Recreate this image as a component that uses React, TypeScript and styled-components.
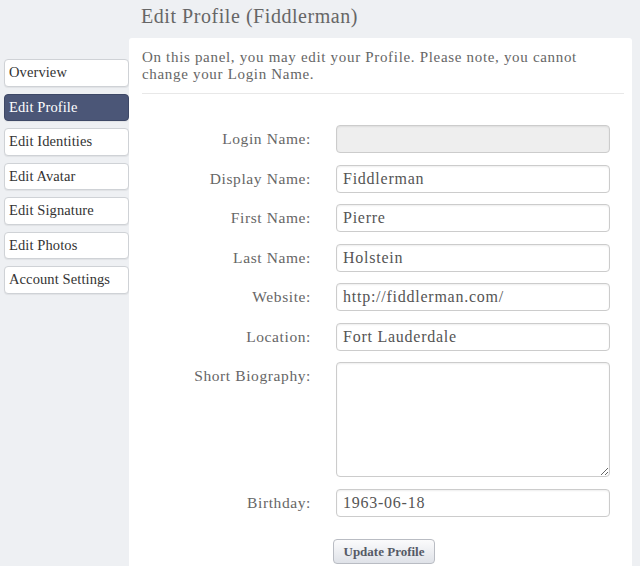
import React from "react";
import styled, { createGlobalStyle } from "styled-components";

const serif = `"Liberation Serif", "DejaVu Serif", serif`;

const Global = createGlobalStyle`
  html, body { margin: 0; padding: 0; }
  body {
    background: #eef0f3;
    font-family: ${serif};
    color: #555;
  }
`;

const Page = styled.div`
  width: 640px;
  height: 566px;
  display: flex;
  flex-direction: column;
  overflow: hidden;
`;

const Title = styled.h1`
  margin: 0;
  height: 38px;
  padding: 5px 0 0 141px;
  box-sizing: border-box;
  font-size: 20px;
  font-weight: normal;
  color: #666;
  letter-spacing: 0.55px;
`;

const Body = styled.div`
  flex: 1;
  display: flex;
  align-items: stretch;
`;

const Sidebar = styled.nav`
  width: 125px;
  padding: 21px 0 0 4px;
  display: flex;
  flex-direction: column;
  gap: 7px;
  flex-shrink: 0;
`;

const NavButton = styled.div<{ $active?: boolean }>`
  height: 27.5px;
  box-sizing: border-box;
  border: 1px solid ${(p) => (p.$active ? "#3e4866" : "#cfd2d6")};
  border-radius: 4px;
  background: ${(p) => (p.$active ? "#4b5677" : "#fff")};
  color: ${(p) => (p.$active ? "#fff" : "#333")};
  font-size: 14.5px;
  letter-spacing: 0.1px;
  padding: 0 0 0 4px;
  display: flex;
  align-items: center;
  box-shadow: 0 1px 1px rgba(0, 0, 0, 0.06);
`;

const Panel = styled.main`
  flex: 1;
  margin-right: 8px;
  background: #fff;
  border-radius: 3px 3px 0 0;
  padding: 11px 8px 0 13px;
  display: flex;
  flex-direction: column;
`;

const Intro = styled.p`
  margin: 0;
  font-size: 15px;
  line-height: 17px;
  color: #666;
  letter-spacing: 0.68px;
  padding-bottom: 10px;
  border-bottom: 1px solid #e8e8e8;
`;

const Form = styled.form`
  display: grid;
  grid-template-columns: 169px 274px;
  column-gap: 25px;
  row-gap: 11.5px;
  margin-top: 31px;
  align-items: start;
`;

const Label = styled.label`
  text-align: right;
  font-size: 15.5px;
  letter-spacing: 0.6px;
  color: #666;
  line-height: 28px;
`;

const Field = styled.input<{ $disabled?: boolean }>`
  width: 274px;
  height: 28px;
  box-sizing: border-box;
  border: 1px solid #cccccc;
  border-radius: 4px;
  background: ${(p) => (p.$disabled ? "#eeeeee" : "#fff")};
  box-shadow: inset 0 1px 2px rgba(0, 0, 0, 0.07);
  font-family: ${serif};
  font-size: 16px;
  letter-spacing: 0.75px;
  color: #555;
  padding: 0 6px;
  outline: none;
`;

const Area = styled.textarea`
  width: 274px;
  height: 115px;
  box-sizing: border-box;
  border: 1px solid #cccccc;
  border-radius: 4px;
  box-shadow: inset 0 1px 2px rgba(0, 0, 0, 0.07);
  resize: vertical;
  outline: none;
`;

const Submit = styled.button`
  grid-column: 2;
  justify-self: start;
  margin: 11px 0 0 -3px;
  width: 102px;
  height: 25px;
  border: 1px solid #b9bcc3;
  border-radius: 4px;
  background: linear-gradient(#fbfbfc, #dfe2e8);
  font-family: ${serif};
  font-weight: bold;
  font-size: 13px;
  color: #555a66;
  padding: 0;
`;

const nav = [
  "Overview",
  "Edit Profile",
  "Edit Identities",
  "Edit Avatar",
  "Edit Signature",
  "Edit Photos",
  "Account Settings",
];

const fields: { label: string; value: string; disabled?: boolean }[] = [
  { label: "Login Name:", value: "", disabled: true },
  { label: "Display Name:", value: "Fiddlerman" },
  { label: "First Name:", value: "Pierre" },
  { label: "Last Name:", value: "Holstein" },
  { label: "Website:", value: "http://fiddlerman.com/" },
  { label: "Location:", value: "Fort Lauderdale" },
];

export default function App() {
  return (
    <Page>
      <Global />
      <Title>Edit Profile (Fiddlerman)</Title>
      <Body>
        <Sidebar>
          {nav.map((n) => (
            <NavButton key={n} $active={n === "Edit Profile"}>
              {n}
            </NavButton>
          ))}
        </Sidebar>
        <Panel>
          <Intro>
            On this panel, you may edit your Profile. Please note, you cannot
            <br />
            change your Login Name.
          </Intro>
          <Form onSubmit={(e) => e.preventDefault()}>
            {fields.map((f) => (
              <React.Fragment key={f.label}>
                <Label>{f.label}</Label>
                <Field
                  $disabled={f.disabled}
                  disabled={f.disabled}
                  defaultValue={f.value}
                />
              </React.Fragment>
            ))}
            <Label>Short Biography:</Label>
            <Area />
            <Label>Birthday:</Label>
            <Field defaultValue="1963-06-18" />
            <Submit type="submit">Update Profile</Submit>
          </Form>
        </Panel>
      </Body>
    </Page>
  );
}
